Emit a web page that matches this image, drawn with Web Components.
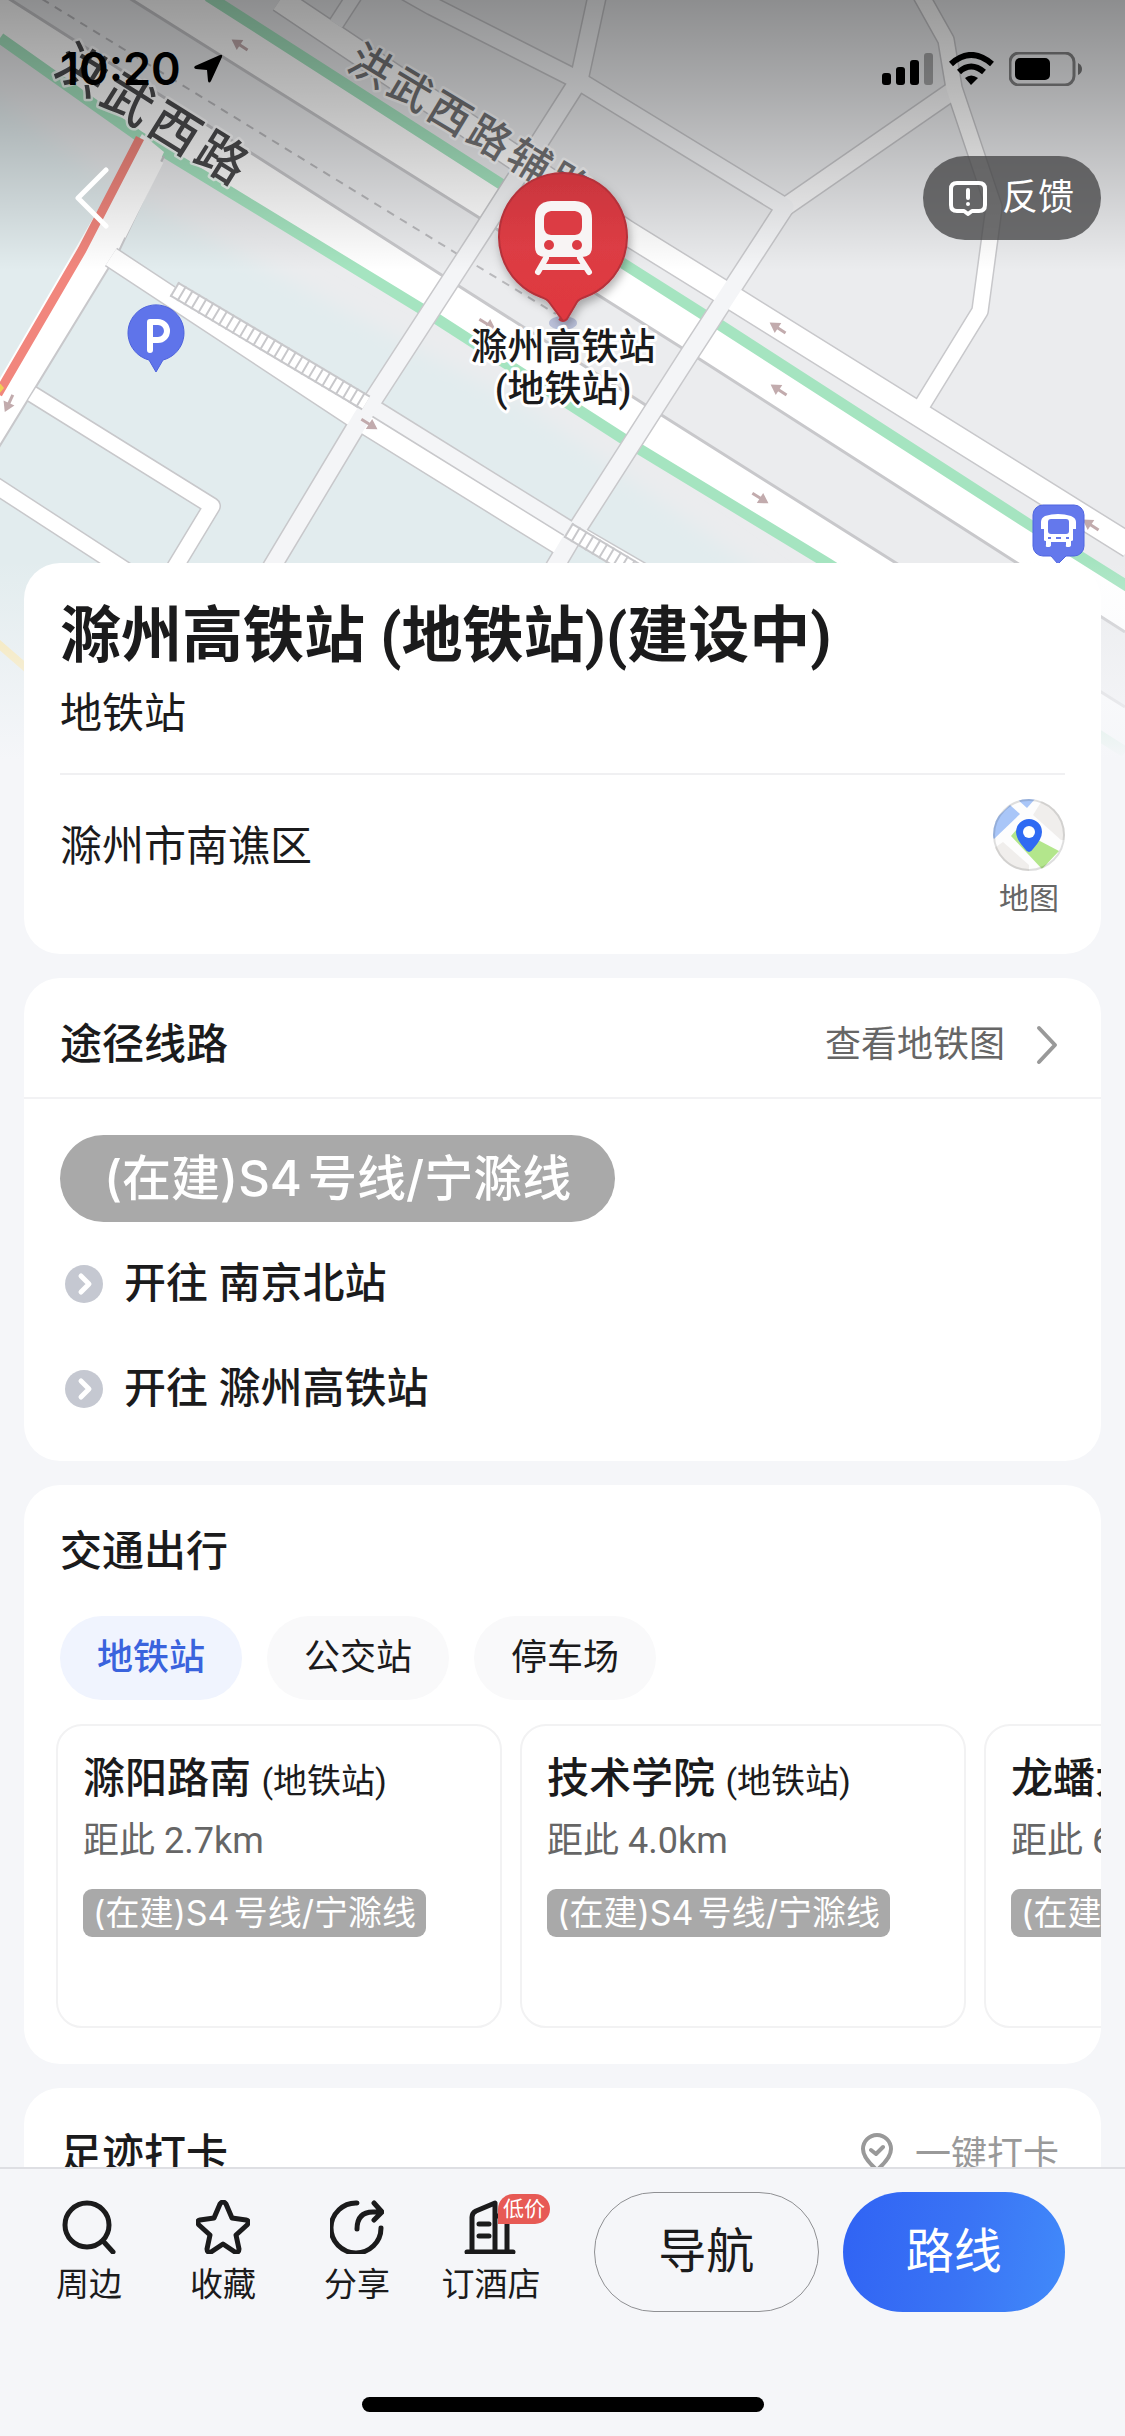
<!DOCTYPE html>
<html lang="zh-CN">
<head>
<meta charset="utf-8">
<meta name="viewport" content="width=device-width, initial-scale=1">
<title>滁州高铁站 (地铁站)</title>
<style>
  body {
    margin: 0;
    background: #f5f6f9;
    color: #1b1b1c;
    font-family: Roboto, "Noto Sans CJK SC", sans-serif;
    font-size: 42px;
    line-height: 60px;
  }
</style>
</head>
<body>
<station-page></station-page>

<script>
// Map drawn behind the header; fades into the page colour at the bottom
class StationMap extends HTMLElement {
  constructor() {
    super();
    this.attachShadow({ mode: 'open' });
  }

  connectedCallback() {
    // Minor roads: drawn twice, first as grey casing, then as fill
    const roads = [
      { d: 'M280 0 L626 232 L726 294 L1130 546', w: 23, fill: '#fff' },
      { d: 'M336 24 L358 -10', w: 14, fill: '#f4f5f7' },
      { d: 'M400 -12 L432 6 L574 78', w: 17, fill: '#f4f5f7' },
      { d: 'M954 90 L785 207', w: 17, fill: '#f8f8f9' },
      { d: 'M918 -10 L946 40 L954 88 L994 207 L980 311 L921 407', w: 15, fill: '#fff' },
      { d: 'M111 257 L352 416 L560 545', w: 19, fill: '#fff' },
      { d: 'M368 404 L574 532', w: 15, fill: '#f4f5f7' },
      { d: 'M574 532 L760 640', w: 16, fill: '#fff' },
      { d: 'M32 394 L212 506 L160 592', w: 15, fill: '#fff' },
      { d: 'M-10 482 L130 573', w: 15, fill: '#fff' },
      { d: 'M598 -8 L579 80 L482 232 L360 420 L258 590', w: 17, fill: '#f4f5f7' },
      { d: 'M574 78 L785 207 L690 353 L579 526 L540 592', w: 17, fill: '#f4f5f7' }
    ];
    const casing = roads.map(r => `<path d="${r.d}" stroke="#c8c8cb" stroke-width="${r.w + 3}"/>`).join('');
    const fills = roads.map(r => `<path d="${r.d}" stroke="${r.fill}" stroke-width="${r.w}"/>`).join('');

    // One-way arrows: x, y, angle
    const arrows = [[240, 45, 213], [9, 403, 115], [369, 424, 32], [487, 324, 32],
      [778, 328, 213], [779, 390, 213], [760, 498, 32], [1091, 525, 213]]
      .map(([x, y, a]) => `<g transform="translate(${x} ${y}) rotate(${a})">
        <path d="M-9 0H2" stroke="#c2abad" stroke-width="3"/><path d="M0 -6L10 0L0 6Z" fill="#c2abad"/></g>`).join('');

    this.shadowRoot.innerHTML = `
    <style>
      :host { display: block; overflow: hidden; }
      svg { display: block; width: 100%; height: 100%; }
      .road { font-weight: 500; }
      text { paint-order: stroke; stroke-linejoin: round; }
    </style>
    <svg viewBox="0 0 1125 760" preserveAspectRatio="xMidYMin slice" role="img" aria-label="地图">
      <defs>
        <linearGradient id="shade" x1="0" y1="0" x2="0" y2="1">
          <stop offset="0" stop-color="#000" stop-opacity=".4"/>
          <stop offset=".35" stop-color="#000" stop-opacity=".27"/>
          <stop offset="1" stop-color="#000" stop-opacity="0"/>
        </linearGradient>
        <linearGradient id="fade" x1="0" y1="0" x2="0" y2="1">
          <stop offset="0" stop-color="#f5f6f9" stop-opacity="0"/>
          <stop offset="1" stop-color="#f5f6f9"/>
        </linearGradient>
        <linearGradient id="red" x1="0" y1="0" x2="0" y2="1">
          <stop offset="0" stop-color="#c9353d"/>
          <stop offset=".5" stop-color="#dc3c44"/>
          <stop offset="1" stop-color="#e0383f"/>
        </linearGradient>
        <filter id="soft" x="-10%" y="-10%" width="120%" height="120%"><feGaussianBlur stdDeviation="10"/></filter>
        <filter id="shadow" x="-30%" y="-30%" width="160%" height="160%">
          <feDropShadow dx="2" dy="5" stdDeviation="5" flood-color="#000" flood-opacity=".3"/>
        </filter>
      </defs>

      <rect width="1125" height="760" fill="#ebecee"/>
      <path d="M-40 70L120 190L530 408L800 600V800H-40Z" fill="#e2ecee" filter="url(#soft)"/>

      <g fill="none" stroke-linejoin="round">
        <path d="M11 0L256 156L440 274L644 404L896 563L1125 707V780L827 563L636 449L420 308L140 137L0 38V-7Z" fill="#fff"/>
        <path d="M0 -7L256 156L440 274L644 404L896 563L1125 707" stroke="#c8c8cb" stroke-width="3"/>
        <path d="M94 -24L478 217L598 295L690 353L1017 563L1125 632V588L720 325L624 264L501 182L214 0H94Z" fill="#fff"/>
        <path d="M94 -24L478 217L598 295L690 353L1017 563L1125 632" stroke="#c8c8cb" stroke-width="3"/>
        <path d="M0 38L140 137L420 308L636 447L827 563L1125 752" stroke="#a5e4c0" stroke-width="11"/>
        <path d="M208 -4L501 184L624 264L720 325L1030 525L1130 588" stroke="#a5e4c0" stroke-width="11"/>
        <path d="M42 -1L459 255L556 314" stroke="#b9b9bc" stroke-width="2" stroke-dasharray="8 7"/>
        <path d="M142 134L164 152L119 251L-4 452V385Z" fill="#fff"/>
        <path d="M164 156L119 251L-4 452" stroke="#c8c8cb" stroke-width="2"/>
        ${casing}
        ${fills}
        <path d="M158 160L120 235" stroke="#fff" stroke-width="12"/>
        <path d="M140 138L82 250L-2 394" stroke="#f1867d" stroke-width="9"/>
        <path d="M-6 376L4 388L-8 402Z" fill="#f0cf55"/>
        <path d="M-6 640L40 680" stroke="#f5e3a4" stroke-width="8"/>
        <g stroke="#c8c8cb" stroke-width="17">
          <path d="M174 289L366 403"/>
          <path d="M568 530L660 585"/>
          <path d="M174 289L366 403" stroke="#fff" stroke-width="13"/>
          <path d="M568 530L660 585" stroke="#fff" stroke-width="13"/>
          <path d="M174 289L366 403" stroke-dasharray="2 6"/>
          <path d="M568 530L660 585" stroke-dasharray="2 6"/>
        </g>
        ${arrows}
      </g>

      <g class="road" stroke="#fff" stroke-opacity=".8" stroke-width="5">
        <text font-size="50" fill="#4b4b4d" transform="translate(51 72) rotate(32)">洪&#x200A;武&#x200A;西&#x200A;路</text>
        <text font-size="42" fill="#737375" transform="translate(345 68) rotate(31)">洪&#x200A;武&#x200A;西&#x200A;路&#x200A;辅&#x200A;路</text>
      </g>
      <rect width="1125" height="270" fill="url(#shade)"/>
      <rect y="560" width="1125" height="200" fill="url(#fade)"/>

      <g>
        <path d="M156 372L149 360A28 28 0 1 1 163 360Z" fill="#5f74ea" stroke="#4d62dd" stroke-width="1"/>
        <path d="M150 350V322H158A9 9 0 0 1 158 340H150" fill="none" stroke="#fff" stroke-width="6" stroke-linecap="round" stroke-linejoin="round"/>
      </g>
      <g>
        <path d="M1043 505H1074A10 10 0 0 1 1084 515V546A10 10 0 0 1 1074 556H1066L1058 564L1051 556H1043A10 10 0 0 1 1033 546V515A10 10 0 0 1 1043 505Z" fill="#6478ec" stroke="#4f65e0" stroke-width="1"/>
        <path d="M1045 516Q1058 512 1071 516Q1076 518 1076 522V529H1073V540Q1073 541 1071 541V545Q1071 547 1068 547T1066 545V542H1051V545Q1051 547 1048 547T1046 545V541Q1044 541 1044 540V529H1041V522Q1041 518 1045 516Z" fill="#fff"/>
        <rect x="1048" y="519" width="21" height="15" rx="3" fill="#6478ec"/>
        <path d="M1048 538H1051M1056 538H1061M1066 538H1069" stroke="#6478ec" stroke-width="2"/>
      </g>

      <ellipse cx="563" cy="323" rx="14" ry="7" fill="#b9bfd8"/>
      <path d="M563 321L549 302Q547 299 541 297A64 64 0 1 1 585 297Q579 299 577 302L567 319Q563 323 559 319Z" fill="url(#red)" stroke="#b5323a" stroke-width="2" filter="url(#shadow)"/>
      <g>
        <path d="M551 201H575Q592 202 592 219V247Q592 257 581 257H546Q535 257 535 247V219Q535 202 551 201Z" fill="#f8f4f4"/>
        <path d="M551 211H575Q582 212 582 219V227Q582 234 575 235H551Q544 234 544 227V219Q544 212 551 211Z" fill="#dc3c44"/>
        <circle cx="549" cy="245" r="5" fill="#dc3c44"/><circle cx="577" cy="245" r="5" fill="#dc3c44"/>
        <path d="M546 258L538 272M580 258L589 272M542 267H585" stroke="#f8f4f4" stroke-width="6" stroke-linecap="round"/>
      </g>
      <g font-size="37" font-weight="500" fill="#1b1b1c" stroke="#fff" stroke-width="6" text-anchor="middle">
        <text x="563" y="360">滁州高铁站</text>
        <text x="563" y="402">(地铁站)</text>
      </g>
    </svg>`;
  }
}
customElements.define('station-map', StationMap);

// Phone status bar: clock, signal, wifi, battery
class StatusBar extends HTMLElement {
  constructor() {
    super();
    this.attachShadow({ mode: 'open' });
  }

  connectedCallback() {
    this.shadowRoot.innerHTML = `
    <style>
      :host {
        display: flex;
        align-items: center;
        justify-content: space-between;
        padding: 39px 42px 39px 60px;
        color: #000;
        font-family: Inter, sans-serif;
      }
      .time { display: flex; align-items: center; gap: 12px; font-size: 45px; font-weight: 600; }
      .state { display: flex; align-items: center; gap: 15px; }
      svg { display: block; }
    </style>
    <div class="time">
      <time>10:20</time>
      <svg width="30" height="30" viewBox="0 0 30 30"><path d="M27 1L2 12Q0 14 3 15L14 16L15 27Q16 30 18 27L29 3Q30 0 27 1Z"/></svg>
    </div>
    <div class="state">
      <svg width="52" height="34" viewBox="0 0 52 34">
        <rect y="21" width="9" height="12" rx="3"/>
        <rect x="14" y="15" width="9" height="18" rx="3"/>
        <rect x="28" y="8" width="9" height="25" rx="3"/>
        <rect x="42" y="1" width="9" height="32" rx="3" opacity=".3"/>
      </svg>
      <svg width="45" height="34" viewBox="0 0 45 34" fill="none" stroke="#000" stroke-width="6">
        <path d="M2 12Q22 -6 43 12M10 20Q22 9 35 20"/>
        <path d="M16 26Q22 21 29 26L22 33Z" fill="#000" stroke="none"/>
      </svg>
      <svg width="74" height="34" viewBox="0 0 74 34">
        <rect x="1" y="1" width="64" height="32" rx="9" fill="none" stroke="#000" stroke-opacity=".45" stroke-width="3"/>
        <rect x="6" y="6" width="35" height="22" rx="5"/>
        <path d="M69 11Q73 13 73 17T69 23Z" opacity=".5"/>
      </svg>
    </div>`;
  }
}
customElements.define('status-bar', StatusBar);

// White rounded card with an optional header row
class InfoCard extends HTMLElement {
  constructor() {
    super();
    this.attachShadow({ mode: 'open' });
  }

  connectedCallback() {
    const heading = this.getAttribute('heading');
    this.shadowRoot.innerHTML = `
    <style>
      :host {
        display: block;
        background: #fff;
        border-radius: 36px;
        overflow: hidden;
      }
      header {
        display: flex;
        align-items: center;
        justify-content: space-between;
        padding: 37px 42px 22px 36px;
      }
      :host([divided]) header { border-bottom: 2px solid #f2f2f4; }
      h2 { margin: 0; font-size: 42px; font-weight: 500; line-height: 60px; }
    </style>
    ${heading ? `<header><h2>${heading}</h2><slot name="extra"></slot></header>` : ''}
    <slot></slot>`;
  }
}
customElements.define('info-card', InfoCard);

// Title, type and address of the place
class PlaceSummary extends HTMLElement {
  constructor() {
    super();
    this.attachShadow({ mode: 'open' });
  }

  connectedCallback() {
    this.shadowRoot.innerHTML = `
    <style>
      :host { display: block; padding: 37px 36px 36px; }
      h1 { margin: 0 0 12px; font-size: 61px; line-height: 72px; font-weight: 700; }
      p { margin: 0; }
      .address {
        display: flex;
        justify-content: space-between;
        align-items: flex-start;
        margin-top: 29px;
        padding-top: 24px;
        border-top: 2px solid #f0f0f2;
      }
      .address p { padding-top: 18px; }
      button {
        display: flex;
        flex-direction: column;
        align-items: center;
        gap: 8px;
        padding: 0;
        border: 0;
        background: none;
        font: inherit;
        font-size: 30px;
        line-height: 39px;
        color: #666;
      }
    </style>
    <h1><slot name="title"></slot></h1>
    <p><slot name="kind"></slot></p>
    <div class="address">
      <p><slot name="address"></slot></p>
      <button type="button">
        <svg width="72" height="72" viewBox="0 0 72 72">
          <clipPath id="disc"><circle cx="36" cy="36" r="36"/></clipPath>
          <g clip-path="url(#disc)">
            <rect width="72" height="72" fill="#fdfdfd"/>
            <path d="M17 6L27 15L1 40L-8 30Z" fill="#a9c6f8"/>
            <path d="M24 0H42L34 9Z" fill="#a9c6f8"/>
            <path d="M50 0L40 16L68 41H80V0Z" fill="#f0eeec"/>
            <path d="M0 50L10 43L36 66V80H0Z" fill="#f0eeec"/>
            <path d="M18 37L24 30L66 52L49 70Z" fill="#b3e68c"/>
          </g>
          <circle cx="36" cy="36" r="35" fill="none" stroke="#000" stroke-opacity=".12" stroke-width="2"/>
          <path d="M36 53Q34 53 32 50Q23 40 23 33A13 13 0 0 1 49 33Q49 40 40 50Q38 53 36 53Z" fill="#2f6af3"/>
          <circle cx="36" cy="33" r="6" fill="#fff"/>
        </svg>
        地图
      </button>
    </div>`;
  }
}
customElements.define('place-summary', PlaceSummary);

// Line badge followed by its directions
class LineRoutes extends HTMLElement {
  constructor() {
    super();
    this.attachShadow({ mode: 'open' });
  }

  connectedCallback() {
    const directions = this.getAttribute('directions').split(',');
    const items = directions.map(name => `
      <li>
        <svg width="38" height="38" viewBox="0 0 38 38">
          <circle cx="19" cy="19" r="19" fill="#c5c8d1"/>
          <path d="M16 11L24 19L16 27" fill="none" stroke="#fff" stroke-width="5" stroke-linecap="round" stroke-linejoin="round"/>
        </svg>
        开往 ${name}
      </li>`).join('');

    this.shadowRoot.innerHTML = `
    <style>
      :host { display: block; padding: 36px 36px 42px; }
      .line {
        display: inline-block;
        padding: 0 44px;
        border-radius: 44px;
        background: #a9a9a9;
        color: #fff;
        font-family: Inter, "Noto Sans CJK SC", sans-serif;
        font-size: 49px;
        font-weight: 500;
        line-height: 87px;
        text-autospace: normal;
        vertical-align: top;
      }
      ul {
        display: flex;
        flex-direction: column;
        gap: 45px;
        margin: 32px 0 0;
        padding: 0 0 0 5px;
        list-style: none;
        font-weight: 500;
      }
      li { display: flex; align-items: center; gap: 21px; }
    </style>
    <span class="line"><slot></slot></span>
    <ul>${items}</ul>`;
  }
}
customElements.define('line-routes', LineRoutes);

// Tabs and a horizontal row of nearby stops
class NearbyStops extends HTMLElement {
  constructor() {
    super();
    this.attachShadow({ mode: 'open' });
  }

  connectedCallback() {
    const tabs = ['地铁站', '公交站', '停车场'];
    const stops = [
      { name: '滁阳路南', distance: '2.7km' },
      { name: '技术学院', distance: '4.0km' },
      { name: '龙蟠大道', distance: '6.1km' }
    ];

    this.shadowRoot.innerHTML = `
    <style>
      :host { display: block; padding: 12px 0 36px; }
      .tabs { display: flex; gap: 25px; padding: 0 36px; }
      button {
        padding: 0 37px;
        border: 0;
        border-radius: 42px;
        background: #f9f9fa;
        color: inherit;
        font: inherit;
        font-size: 36px;
        line-height: 84px;
      }
      button[aria-selected="true"] { background: #f0f4fe; color: #3a63dd; font-weight: 500; }
      .stops {
        display: flex;
        gap: 18px;
        margin-top: 24px;
        padding-left: 32px;
        overflow: hidden;
      }
      article {
        box-sizing: border-box;
        flex: 0 0 446px;
        padding: 23px 25px 89px;
        border: 2px solid #f2f2f3;
        border-radius: 26px;
        white-space: nowrap;
      }
      h3 { margin: 0; font-size: 42px; font-weight: 500; }
      h3 small { font-size: 34px; font-weight: 400; }
      p { margin: 0 0 18px; font-size: 36px; line-height: 60px; color: #666; }
      .line {
        display: block;
        width: fit-content;
        padding: 0 10px;
        border-radius: 9px;
        background: #a9a9a9;
        color: #fff;
        font-family: Inter, "Noto Sans CJK SC", sans-serif;
        font-size: 34px;
        line-height: 48px;
        text-autospace: normal;
      }
    </style>
    <div class="tabs" role="tablist">
      ${tabs.map((tab, i) => `<button type="button" role="tab" aria-selected="${i === 0}">${tab}</button>`).join('')}
    </div>
    <div class="stops">
      ${stops.map(stop => `
        <article>
          <h3>${stop.name} <small>(地铁站)</small></h3>
          <p>距此 ${stop.distance}</p>
          <span class="line">(在建)S4号线/宁滁线</span>
        </article>`).join('')}
    </div>`;

    // Only one tab is selected at a time
    this.shadowRoot.querySelector('.tabs').addEventListener('click', event => {
      const tab = event.target.closest('button');
      if (!tab) return;
      this.shadowRoot.querySelectorAll('button').forEach(b => b.setAttribute('aria-selected', b === tab));
    });
  }
}
customElements.define('nearby-stops', NearbyStops);

// Toolbar at the bottom of the screen
class BottomBar extends HTMLElement {
  constructor() {
    super();
    this.attachShadow({ mode: 'open' });
  }

  connectedCallback() {
    const tools = [
      { label: '周边', icon: '<circle cx="25" cy="25" r="22"/><path d="M41 41L51 52"/>' },
      { label: '收藏', icon: '<path d="M24 4Q27 0 30 4L36 18L50 20Q54 21 51 25L40 35L43 49Q43 53 39 52L27 44L15 52Q11 53 11 49L14 35L3 25Q0 21 4 20L18 18Z"/>' },
      { label: '分享', icon: '<path d="M27 3A25 25 0 1 0 51 28"/><path d="M27 29Q27 12 43 12H50M44 3L52 12L44 20"/>' },
      { label: '订酒店', icon: '<path d="M3 52H49M8 52V17Q8 13 12 11L31 3V52M31 16H43V52M15 24H25M15 36H25"/>', badge: '低价' }
    ];

    this.shadowRoot.innerHTML = `
    <style>
      :host {
        display: block;
        border-top: 2px solid #dedfe3;
        background: #f5f6f9;
      }
      .row { display: flex; padding: 23px 60px 85px 22px; }
      .tools { display: flex; margin-right: 36px; }
      .tools button {
        position: relative;
        display: flex;
        flex-direction: column;
        align-items: center;
        gap: 10px;
        width: 134px;
        padding: 8px 0 0;
        border: 0;
        background: none;
        color: inherit;
        font: inherit;
        font-size: 33px;
        line-height: 42px;
      }
      svg { display: block; fill: none; stroke: currentColor; stroke-width: 5; stroke-linecap: round; stroke-linejoin: round; }
      .badge {
        position: absolute;
        top: 2px;
        left: 74px;
        padding: 0 5px;
        border-radius: 15px 15px 15px 0;
        background: #e75a55;
        color: #fff;
        font-size: 21px;
        line-height: 30px;
      }
      .actions { display: flex; flex: 1; gap: 24px; }
      .actions button {
        flex: 1;
        box-sizing: border-box;
        height: 120px;
        padding: 0;
        border: 1px solid #8f9093;
        border-radius: 60px;
        background: none;
        color: inherit;
        font: inherit;
        font-size: 48px;
      }
      .actions .primary {
        border: 0;
        background: linear-gradient(100deg, #3063f4, #3a74f5 55%, #418afa);
        color: #fff;
      }
      .home {
        width: 402px;
        height: 15px;
        margin: 0 auto 24px;
        border-radius: 8px;
        background: #000;
      }
    </style>
    <div class="row">
      <div class="tools">
        ${tools.map(tool => `
          <button type="button">
            <svg width="54" height="54" viewBox="0 0 54 54">${tool.icon}</svg>
            ${tool.label}
            ${tool.badge ? `<span class="badge">${tool.badge}</span>` : ''}
          </button>`).join('')}
      </div>
      <div class="actions">
        <button type="button">导航</button>
        <button type="button" class="primary">路线</button>
      </div>
    </div>
    <div class="home"></div>`;
  }
}
customElements.define('bottom-bar', BottomBar);

// Whole page: scrolling content above a fixed toolbar
class StationPage extends HTMLElement {
  constructor() {
    super();
    this.attachShadow({ mode: 'open' });
  }

  connectedCallback() {
    this.shadowRoot.innerHTML = `
    <style>
      :host { display: grid; grid-template-rows: minmax(0, 1fr) auto; height: 100vh; }
      main { position: relative; overflow-y: auto; scrollbar-width: none; }
      /* The map lies under the header and the first card */
      station-map { position: absolute; top: 0; left: 0; right: 0; height: 760px; }
      .top { position: relative; }
      nav {
        display: flex;
        align-items: center;
        justify-content: space-between;
        padding: 18px 24px 323px 74px;
      }
      button { border: 0; background: none; font: inherit; }
      svg { display: block; fill: none; stroke: currentColor; stroke-linecap: round; stroke-linejoin: round; }
      .back { padding: 0; color: #fff; }
      .feedback {
        display: flex;
        align-items: center;
        gap: 15px;
        padding: 0 27px 0 26px;
        border-radius: 42px;
        background: rgba(70, 70, 72, .78);
        color: #fff;
        font-size: 36px;
        line-height: 84px;
      }
      .cards { position: relative; display: flex; flex-direction: column; gap: 24px; padding: 0 24px 24px; }
      .more {
        display: flex;
        align-items: center;
        gap: 30px;
        color: #666;
        font-size: 36px;
        text-decoration: none;
      }
      .more svg { color: #999; }
      .check { padding: 0; gap: 21px; color: #999; }
    </style>
    <main>
      <station-map></station-map>
      <div class="top">
        <status-bar></status-bar>
        <nav>
          <button type="button" class="back" aria-label="返回">
            <svg width="36" height="62" viewBox="0 0 36 62" stroke-width="5"><path d="M32 3L4 31L32 59"/></svg>
          </button>
          <button type="button" class="feedback">
            <svg width="38" height="36" viewBox="0 0 38 36" stroke-width="4">
              <path d="M8 3H30Q36 3 36 9V25Q36 31 30 31H23L19 34L15 31H8Q2 31 2 25V9Q2 3 8 3Z"/>
              <path d="M19 10V18M19 24V24"/>
            </svg>
            反馈
          </button>
        </nav>
      </div>
      <div class="cards">
        <info-card>
          <place-summary>
            <span slot="title">滁州高铁站 (地铁站)(建设中)</span>
            <span slot="kind">地铁站</span>
            <span slot="address">滁州市南谯区</span>
          </place-summary>
        </info-card>
        <info-card heading="途径线路" divided>
          <a class="more" slot="extra" href="#metro">
            查看地铁图
            <svg width="24" height="40" viewBox="0 0 24 40" stroke-width="4"><path d="M4 3L20 20L4 37"/></svg>
          </a>
          <line-routes directions="南京北站,滁州高铁站">(在建)S4号线/宁滁线</line-routes>
        </info-card>
        <info-card heading="交通出行">
          <nearby-stops></nearby-stops>
        </info-card>
        <info-card heading="足迹打卡">
          <button type="button" class="more check" slot="extra">
            <svg width="34" height="44" viewBox="0 0 34 44" stroke-width="4">
              <path d="M17 37Q3 25 3 16A14 14 0 0 1 31 16Q31 25 17 37Z"/>
              <path d="M11 17L16 21L23 14M4 36Q6 42 17 42T30 36"/>
            </svg>
            一键打卡
          </button>
        </info-card>
      </div>
    </main>
    <bottom-bar></bottom-bar>`;
  }
}
customElements.define('station-page', StationPage);
</script>
</body>
</html>
